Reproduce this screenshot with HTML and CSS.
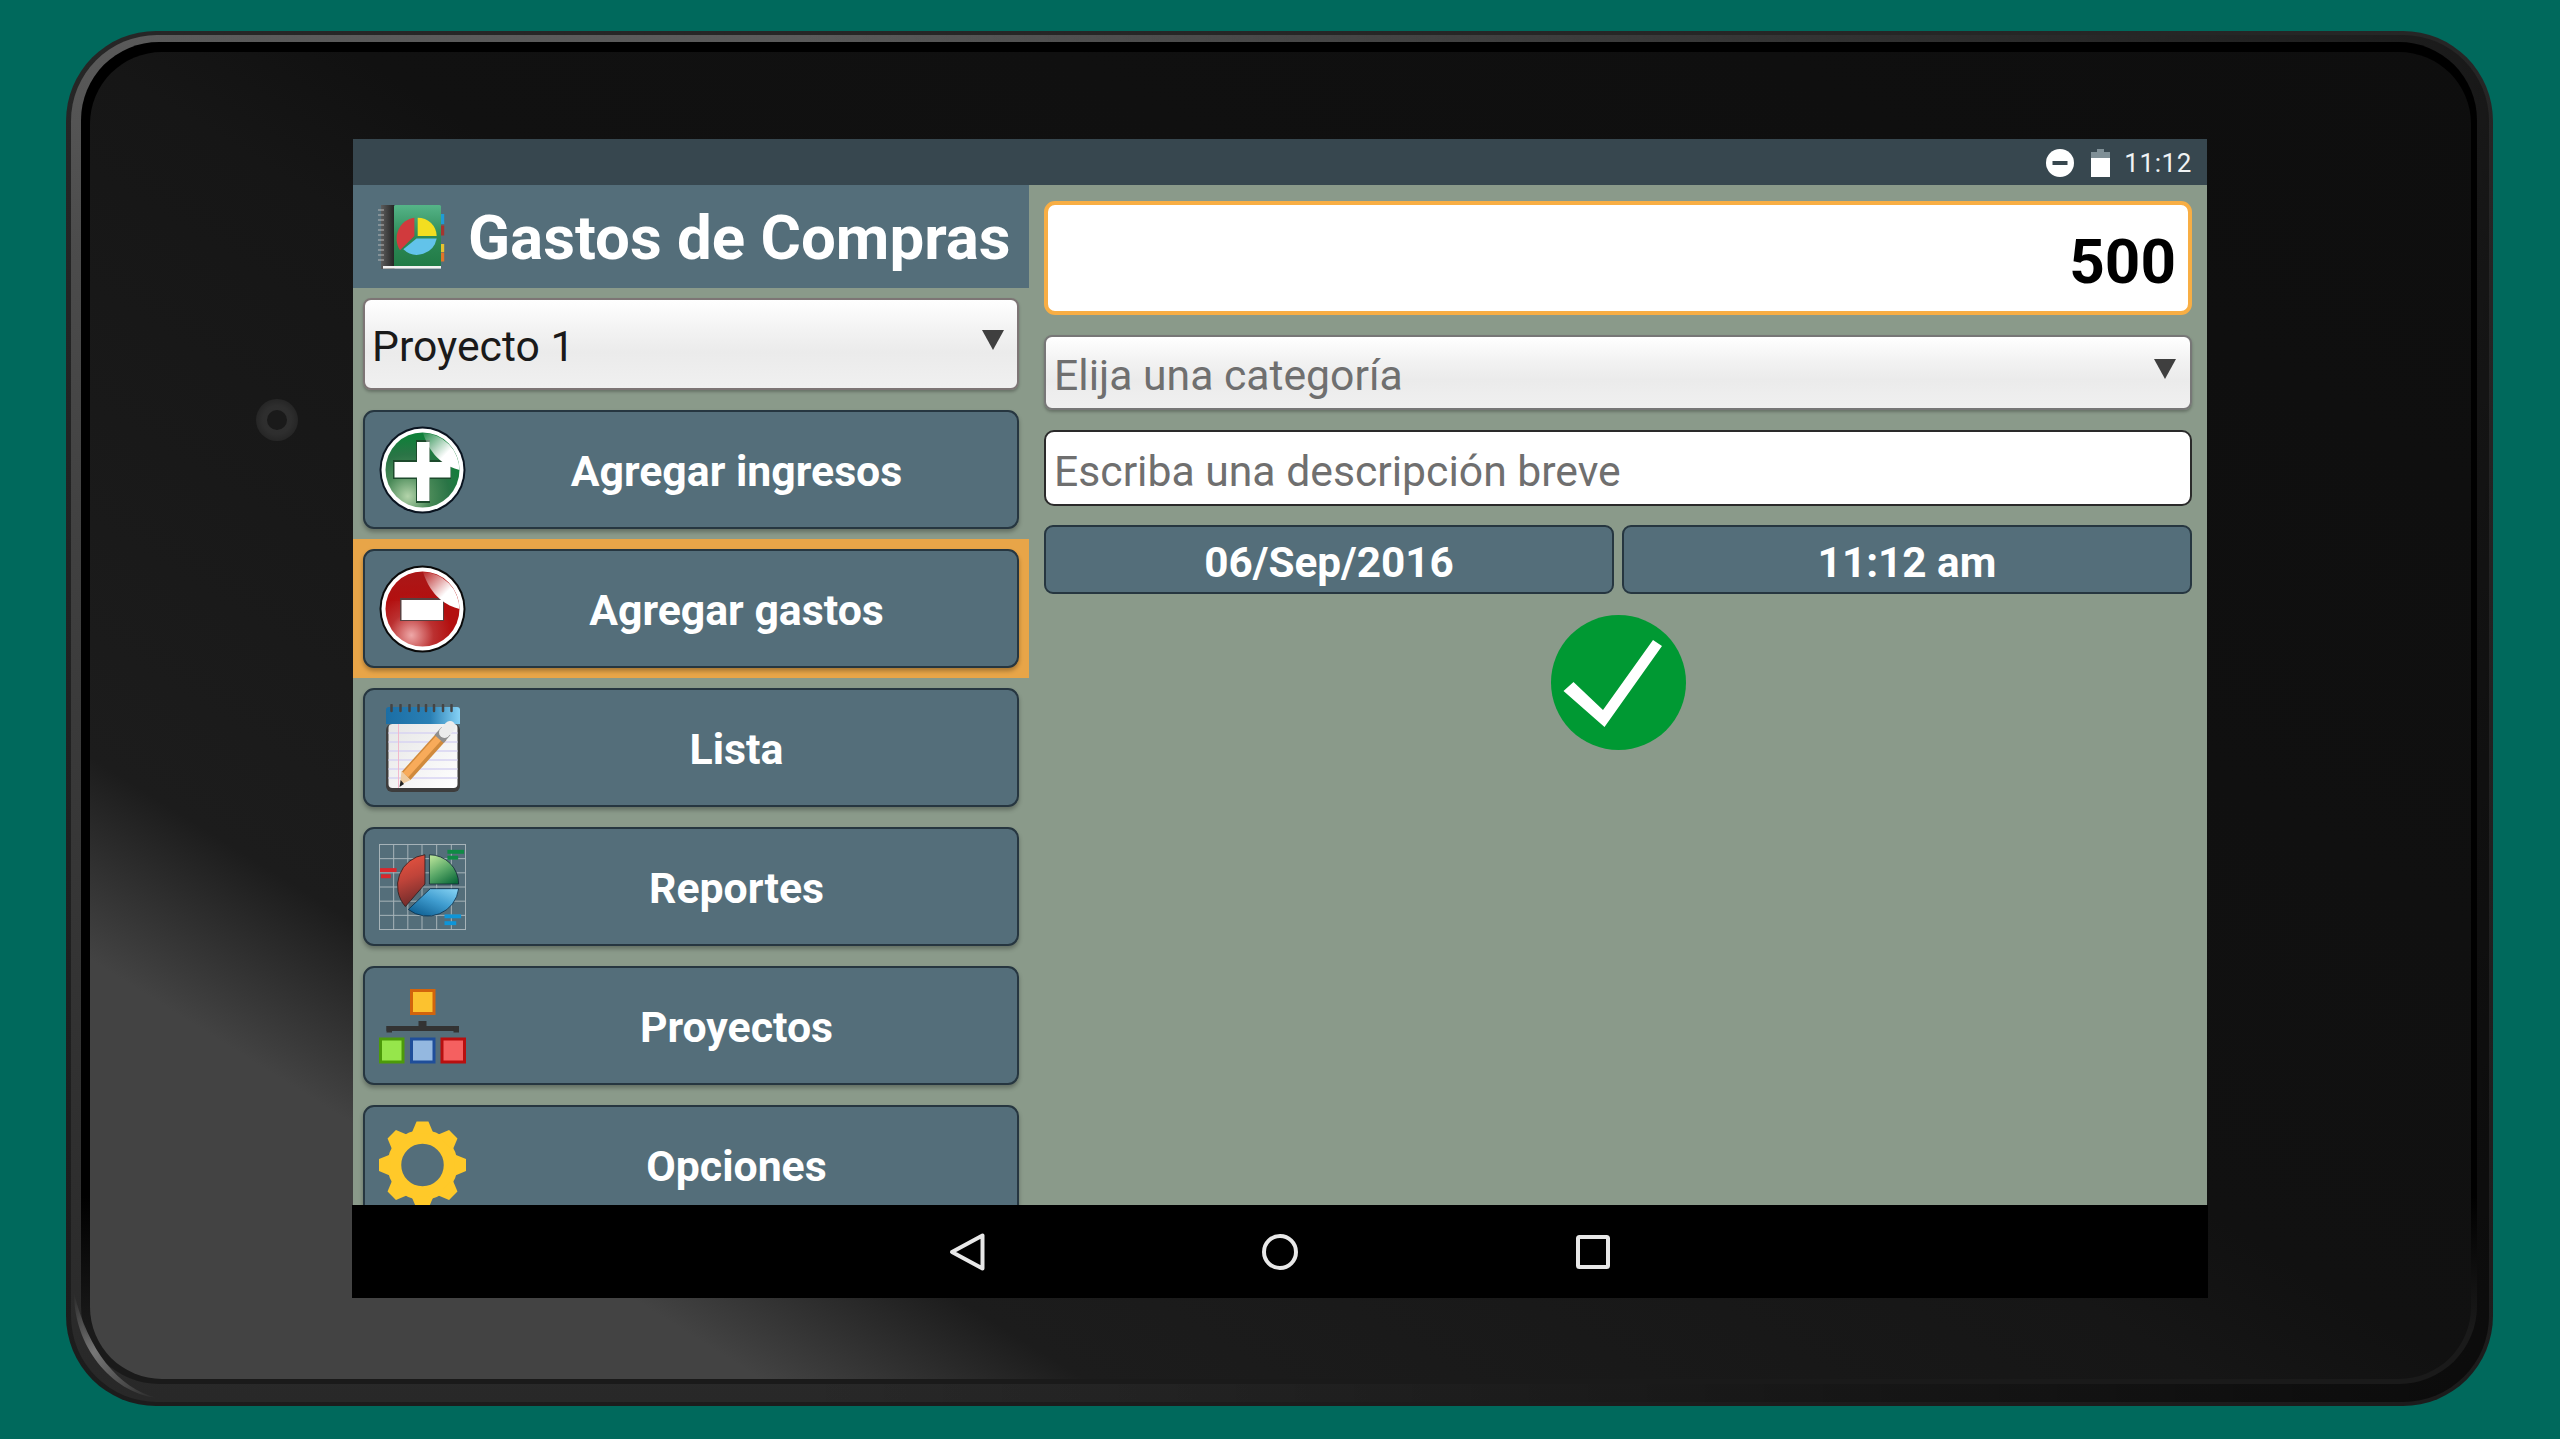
FILE: index.html
```html
<!DOCTYPE html>
<html lang="es">
<head>
<meta charset="utf-8">
<title>Gastos de Compras</title>
<link rel="stylesheet" href="styles.css">
</head>
<body>
<div class="device">
  <div class="rim">
    <div class="ring">
      <div class="face">
        <div class="camera"><div class="lens"></div></div>
        <div class="screen">
          <div class="statusbar">
            <svg class="st-dnd" viewBox="0 0 28 28"><circle cx="14" cy="14" r="14" fill="#fff"/><rect x="6.5" y="12" width="15" height="4" fill="#37474f"/></svg>
            <svg class="st-batt" viewBox="0 0 19 28"><path d="M6 0h7v3h6v25H0V3h6z" fill="#fff"/><path d="M6 0h7v3h6v6H0V3h6z" fill="#7f8f96"/></svg>
            <span class="st-time">11:12</span>
          </div>
          <div class="app">
            <div class="side">
              <header class="title">
                <svg class="logo" viewBox="0 0 70 70">
                  <defs>
                    <linearGradient id="lg1" x1="0" y1="0" x2="0" y2="1"><stop offset="0" stop-color="#55b488"/><stop offset=".5" stop-color="#2e8a57"/><stop offset="1" stop-color="#207a45"/></linearGradient>
                    <linearGradient id="lg2" x1="0" y1="0" x2="1" y2="0"><stop offset="0" stop-color="#5c5c5c"/><stop offset="1" stop-color="#232323"/></linearGradient>
                  </defs>
                  <rect x="5" y="3" width="13.5" height="64" fill="url(#lg2)"/>
                  <rect x="18" y="3" width="47" height="63" rx="1.5" fill="url(#lg1)"/>
                  <g stroke="#b5b5b5" stroke-width="1.2"><path d="M2 8h6M2 13h6M2 18h6M2 23h6M2 28h6M2 33h6M2 38h6M2 43h6M2 48h6M2 53h6M2 58h6"/></g>
                  <rect x="7" y="64" width="58" height="2.6" fill="#f2f2f2"/>
                  <rect x="65" y="12" width="3.2" height="10" fill="#1f9bd6"/>
                  <rect x="65" y="23.5" width="3.2" height="10" fill="#a5352f"/>
                  <rect x="65" y="42" width="3.2" height="8" fill="#e8c12f"/>
                  <rect x="65" y="50.5" width="3.2" height="9" fill="#e0752a"/>
                  <path d="M38.4 15.7A20 21 0 0 0 24 48.3L38.4 34z" fill="#d13a3d"/>
                  <path d="M41.7 15.7A19 18.500 0 0 1 60.700 34H41.700z" fill="#f3de20"/>
                  <path d="M27.300 47.300L40.500 36.500H60.700A20 20 0 0 1 27.300 47.300z" fill="#62c3ea"/>
                </svg>
                <h1 class="title-text">Gastos de Compras</h1>
              </header>
              <div class="project-wrap">
                <div class="spinner project">
                  <span class="spinner-text dark">Proyecto 1</span>
                  <span class="caret"></span>
                </div>
              </div>
              <div class="row">
                <button class="btn">
                  <svg class="ico" viewBox="0 0 87 88">
                    <defs>
                      <radialGradient id="pg1" cx=".3" cy=".85" r=".8"><stop offset="0" stop-color="#b3d4aa"/><stop offset=".38" stop-color="#4a8a58"/><stop offset=".7" stop-color="#2a7446"/><stop offset="1" stop-color="#0f8039"/></radialGradient>
                      <linearGradient id="pg2" x1="0" y1="0" x2="1" y2="1"><stop offset="0" stop-color="#fff" stop-opacity=".1"/><stop offset=".6" stop-color="#fff"/><stop offset="1" stop-color="#fff"/></linearGradient>
                    </defs>
                    <ellipse cx="43.500" cy="44" rx="43" ry="43.500" fill="#0a1420"/>
                    <ellipse cx="43.500" cy="44" rx="41" ry="41.500" fill="#fff"/>
                    <ellipse cx="43.500" cy="44" rx="37" ry="37.500" fill="url(#pg1)"/>
                    <path d="M37 14h14v20h21v19H51v24H37V53H14V34h23z" fill="#1d4a2c"/>
                    <path d="M38 16h12.500v20h21v15.500h-21V75H38V51.500H15.500V36H38z" fill="#fff"/>
                    <path d="M44 7A37 37.500 0 0 1 80.500 44C68 41 52 32 44 7z" fill="url(#pg2)"/>
                  </svg>
                  <span class="label">Agregar ingresos</span>
                </button>
              </div>
              <div class="row selected">
                <button class="btn">
                  <svg class="ico" viewBox="0 0 87 88">
                    <defs>
                      <radialGradient id="mg1" cx=".35" cy=".85" r=".55"><stop offset="0" stop-color="#eea8a8"/><stop offset=".55" stop-color="#bb3030"/><stop offset="1" stop-color="#b30f0f"/></radialGradient>
                      <linearGradient id="mg2" x1="0" y1="0" x2="1" y2="1"><stop offset="0" stop-color="#fff" stop-opacity=".1"/><stop offset=".6" stop-color="#fff"/><stop offset="1" stop-color="#fff"/></linearGradient>
                      <linearGradient id="mg3" x1="0" y1="0" x2="0" y2="1"><stop offset="0" stop-color="#a02020"/><stop offset="1" stop-color="#b30f0f"/></linearGradient>
                    </defs>
                    <ellipse cx="43.500" cy="44" rx="43" ry="43.500" fill="#0a0a0a"/>
                    <ellipse cx="43.500" cy="44" rx="41" ry="41.500" fill="#fff"/>
                    <ellipse cx="43.500" cy="44" rx="37" ry="37.500" fill="url(#mg1)"/>
                    <path d="M44 7A37 37.500 0 0 0 8 36L40 36L60 30z" fill="url(#mg3)" opacity=".55"/>
                    <rect x="21" y="33" width="44" height="23" fill="#5a4040"/>
                    <rect x="22.500" y="35" width="41.500" height="20" fill="#fff"/>
                    <path d="M44 7A37 37.500 0 0 1 80.500 44C68 41 52 32 44 7z" fill="url(#mg2)"/>
                  </svg>
                  <span class="label">Agregar gastos</span>
                </button>
              </div>
              <div class="row">
                <button class="btn">
                  <svg class="ico" viewBox="0 0 87 88">
                    <defs>
                      <linearGradient id="nb" x1="0" y1="0" x2="1" y2="0"><stop offset="0" stop-color="#1b6ea5"/><stop offset=".6" stop-color="#2a80b5"/><stop offset="1" stop-color="#86d2f6"/></linearGradient>
                      <linearGradient id="np" x1="0" y1="0" x2="1" y2="1"><stop offset="0" stop-color="#e6e6e6"/><stop offset="1" stop-color="#fff"/></linearGradient>
                    </defs>
                    <rect x="7" y="20" width="74" height="68" rx="6" fill="#3d3d3d"/>
                    <rect x="9.500" y="20" width="69" height="64" rx="4" fill="url(#np)"/>
                    <g stroke="#d8d4f2" stroke-width="1.500"><path d="M9.500 29h69M9.500 38h69M9.500 47h69M9.500 56h69M9.500 65h69M9.500 74h69"/></g>
                    <path d="M19.500 20v64" stroke="#f2b8cc" stroke-width="1"/>
                    <path d="M7 6a3 3 0 0 1 3-3h68a3 3 0 0 1 3 3v14H7z" fill="url(#nb)"/>
                    <g stroke="#444" stroke-width="2.500" stroke-linecap="round"><path d="M12.500 1v6M21.500 1v6M30.500 1v6M39.500 1v6M47 1v6M55 1v6M64 1v6M72.500 1v6"/></g>
                    <path d="M27 72L63 32" stroke="#d08a3c" stroke-width="12"/>
                    <path d="M26.500 71L62.500 31" stroke="#f8ab5a" stroke-width="7"/>
                    <path d="M60 35L67 27" stroke="#8f8f8f" stroke-width="12"/>
                    <path d="M65.500 28.500L71 22.500" stroke="#ececec" stroke-width="11" stroke-linecap="round"/>
                    <path d="M21 81L22.500 67L31.500 76z" fill="#eecb9f"/>
                    <path d="M20.500 83L21.700 76L25 80z" fill="#222"/>
                  </svg>
                  <span class="label">Lista</span>
                </button>
              </div>
              <div class="row">
                <button class="btn">
                  <svg class="ico" viewBox="0 0 89 88">
                    <defs>
                      <linearGradient id="rr" x1=".3" y1="0" x2=".5" y2="1"><stop offset="0" stop-color="#e8533f"/><stop offset=".45" stop-color="#c0443a"/><stop offset="1" stop-color="#6d2a2a"/></linearGradient>
                      <linearGradient id="rg" x1=".2" y1="0" x2=".8" y2="1"><stop offset="0" stop-color="#b4e096"/><stop offset=".5" stop-color="#5aa868"/><stop offset="1" stop-color="#0d6a3a"/></linearGradient>
                      <linearGradient id="rb" x1="1" y1="0" x2=".2" y2="1"><stop offset="0" stop-color="#8ad6f6"/><stop offset=".5" stop-color="#3f9ccf"/><stop offset="1" stop-color="#0e5f92"/></linearGradient>
                    </defs>
                    <g stroke="#a9b5ba" stroke-width="1" fill="none">
                      <rect x=".5" y=".5" width="88" height="87"/>
                      <path d="M15 0v88M29.500 0v88M44 0v88M59 0v88M74 0v88M0 15h89M0 29.500h89M0 44h89M0 58.500h89M0 73h89"/>
                    </g>
                    <path d="M47 11A32 32 0 0 0 27 64L47 41z" fill="url(#rr)" stroke="#2a1a1a" stroke-width=".8"/>
                    <path d="M51.600 11A30 30 0 0 1 81.500 41H51.600z" fill="url(#rg)" stroke="#123" stroke-width=".8"/>
                    <path d="M52.500 45.700H81.500A32 32 0 0 1 30 67z" fill="url(#rb)" stroke="#0a2a44" stroke-width=".8"/>
                    <rect x="70" y="6" width="17" height="4" fill="#0f8a44"/><rect x="70" y="12" width="11" height="4" fill="#0f8a44"/>
                    <rect x="1" y="24.700" width="17" height="4" fill="#d8272c"/><rect x="2" y="31" width="10" height="4" fill="#d8272c"/>
                    <rect x="67" y="72" width="17" height="4" fill="#0e95d8"/><rect x="67" y="79" width="12" height="4" fill="#0e95d8"/>
                  </svg>
                  <span class="label">Reportes</span>
                </button>
              </div>
              <div class="row">
                <button class="btn">
                  <svg class="ico" viewBox="0 0 87 88">
                    <rect x="32.500" y="8.500" width="22.500" height="23" fill="#fcc22f" stroke="#d2640c" stroke-width="3"/>
                    <rect x="39.500" y="39" width="8" height="6" fill="#333"/>
                    <rect x="7.500" y="44" width="72.500" height="5" fill="#333"/>
                    <rect x="7.500" y="44" width="5.500" height="6.500" fill="#333"/>
                    <rect x="74.500" y="44" width="5.500" height="6.500" fill="#333"/>
                    <rect x="1.500" y="57" width="22.500" height="23" fill="#96e64b" stroke="#4c9a0a" stroke-width="3"/>
                    <rect x="32.500" y="57" width="22.500" height="23" fill="#94b8e0" stroke="#1f4e9a" stroke-width="3"/>
                    <rect x="63" y="57" width="22.500" height="23" fill="#f56060" stroke="#b80f0f" stroke-width="3"/>
                  </svg>
                  <span class="label">Proyectos</span>
                </button>
              </div>
              <div class="row">
                <button class="btn">
                  <svg class="ico" viewBox="0 0 88 88">
                    <circle cx="44" cy="44" r="28.500" fill="none" stroke="#ffc929" stroke-width="14"/>
                    <g fill="#ffc929">
                      <polygon points="38,0 50,0 55,12 33,12"/>
                      <polygon points="38,0 50,0 55,12 33,12" transform="rotate(45 44 44)"/>
                      <polygon points="38,0 50,0 55,12 33,12" transform="rotate(90 44 44)"/>
                      <polygon points="38,0 50,0 55,12 33,12" transform="rotate(135 44 44)"/>
                      <polygon points="38,0 50,0 55,12 33,12" transform="rotate(180 44 44)"/>
                      <polygon points="38,0 50,0 55,12 33,12" transform="rotate(225 44 44)"/>
                      <polygon points="38,0 50,0 55,12 33,12" transform="rotate(270 44 44)"/>
                      <polygon points="38,0 50,0 55,12 33,12" transform="rotate(315 44 44)"/>
                    </g>
                  </svg>
                  <span class="label">Opciones</span>
                </button>
              </div>
            </div>
            <div class="main">
              <div class="amount">500</div>
              <div class="spinner category">
                <span class="spinner-text muted">Elija una categoría</span>
                <span class="caret"></span>
              </div>
              <div class="desc">Escriba una descripción breve</div>
              <div class="when">
                <button class="btn-flat">06/Sep/2016</button>
                <button class="btn-flat">11:12 am</button>
              </div>
              <button class="ok">
                <svg class="ok-ico" viewBox="0 0 135 135">
                  <circle cx="67.500" cy="67.500" r="67.500" fill="#009933"/>
                  <polygon points="12.500,76 22.500,67 52,95 102,25 111,31 53.500,112" fill="#fff"/>
                </svg>
              </button>
            </div>
          </div>
          <nav class="navbar">
            <svg class="nav-ico" viewBox="0 0 40 40"><path d="M35.500 3.500V36.500L5 20z" fill="none" stroke="#e8e8e8" stroke-width="4" stroke-linejoin="round"/></svg>
            <svg class="nav-ico" viewBox="0 0 40 40"><circle cx="20" cy="20" r="16" fill="none" stroke="#e8e8e8" stroke-width="4"/></svg>
            <svg class="nav-ico" viewBox="0 0 40 40"><rect x="5" y="5" width="30" height="30" rx="1.500" fill="none" stroke="#e8e8e8" stroke-width="4"/></svg>
          </nav>
        </div>
      </div>
    </div>
  </div>
  <svg class="gloss" viewBox="66 1270 110 136">
    <defs><linearGradient id="gl" x1="0" y1="0" x2="1" y2="1"><stop offset="0" stop-color="#777" stop-opacity="0"/><stop offset=".4" stop-color="#777"/><stop offset="1" stop-color="#777" stop-opacity="0"/></linearGradient></defs>
    <path d="M74 1293C74 1345 110 1392 157 1398C118 1388 88 1350 74 1293z" fill="url(#gl)"/>
  </svg>
</div>
</body>
</html>
```
FILE: styles.css
```css
* { box-sizing: border-box; }
html, body { margin: 0; padding: 0; }
body {
  width: 2560px;
  height: 1439px;
  overflow: hidden;
  padding: 31px 0 0 66px;
  background: #00695c;
  font-family: Roboto, "Liberation Sans", sans-serif;
}
.device {
  position: relative;
  width: 2427px;
  height: 1375px;
  padding: 4px 4px 4px 5px;
  border-radius: 90px;
  background: linear-gradient(180deg, #262626 0, #1c1c1c 100%);
}
.rim {
  height: 100%;
  padding: 7px 12px 18px 10px;
  border-radius: 86px;
  background:
    linear-gradient(90deg, rgba(0,0,0,0) 0, rgba(0,0,0,0) 30%, rgba(0,0,0,.72) 100%),
    linear-gradient(180deg, #5a5a5a 0, #4c4c4c 15%, #3a3a3a 50%, #282828 100%);
}
.ring {
  height: 100%;
  padding: 10px 6px 5px 9px;
  border-radius: 78px;
  background: linear-gradient(180deg, #000 0, #000 86%, #1a1a1a 96%);
}
.face {
  position: relative;
  height: 100%;
  padding: 87px 0 0 263px;
  border-radius: 72px;
  background: linear-gradient(212deg, #0e0e0e 0, #111 47%, #161616 53%, #1c1c1c 77.9%, #434343 85.1%, #434343 100%);
}
.camera {
  position: absolute;
  left: 166px;
  top: 347px;
  width: 42px;
  height: 42px;
  display: flex;
  align-items: center;
  justify-content: center;
  border-radius: 50%;
  background: radial-gradient(circle, #303030 0, #2e2e2e 48%, #262626 70%, #191919 100%);
}
.lens { width: 20px; height: 20px; border-radius: 50%; background: #1a1a1a; }
.gloss {
  position: absolute;
  left: 0;
  top: 1239px;
  width: 110px;
  height: 136px;
}
.screen {
  width: 1854px;
  height: 1158px;
  display: flex;
  flex-direction: column;
}
.statusbar {
  height: 46px;
  flex: none;
  display: flex;
  align-items: center;
  justify-content: flex-end;
  padding: 2px 15px 0 0;
  background: #37474f;
}
.st-dnd { width: 28px; height: 28px; margin-right: 17px; }
.st-batt { width: 19px; height: 28px; margin-right: 14px; }
.st-time { color: #f0f3f4; font-size: 26px; line-height: 44px; letter-spacing: .6px; }
.app {
  height: 1020px;
  flex: none;
  display: flex;
  overflow: hidden;
  background: #8a9a8a;
}
.side { width: 676px; flex: none; }
.title {
  height: 103px;
  display: flex;
  align-items: center;
  padding-left: 23px;
  background: #546e7a;
}
.logo { width: 70px; height: 70px; flex: none; }
.title-text {
  margin: 3px 0 0 22px;
  color: #fff;
  font-size: 61.8px;
  font-weight: 700;
  white-space: nowrap;
}
.project-wrap { padding: 10px; }
.spinner {
  display: flex;
  align-items: center;
  justify-content: space-between;
  border: 2px solid #7d7575;
  border-radius: 8px;
  background: linear-gradient(180deg, #fff 0, #f2f2f2 35%, #ebebeb 60%, #f0f0f0 100%);
  box-shadow: 0 2px 3px rgba(0,0,0,.25);
}
.project { height: 92px; padding: 0 13px 0 7px; }
.category { height: 75px; margin-top: 20px; padding: 0 14px 0 8px; border-color: #777; }
.spinner-text { font-size: 42.7px; padding-top: 4px; white-space: nowrap; }
.category .spinner-text { padding-top: 5px; }
.dark { color: #1a1a1a; }
.muted { color: #6f6f6f; }
.caret {
  width: 0;
  height: 0;
  margin-bottom: 8px;
  border-left: 11.5px solid transparent;
  border-right: 11.5px solid transparent;
  border-top: 20px solid #3f3f3f;
}
.row { height: 139px; padding: 10px 10px 10px; }
.selected { background: #e8a548; }
.btn {
  width: 100%;
  height: 119px;
  display: flex;
  align-items: center;
  padding: 0 10px 0 14px;
  border: 2px solid #263640;
  border-radius: 11px;
  background: #546e7a;
  box-shadow: 0 3px 4px rgba(0,0,0,.28);
  font-family: inherit;
}
.ico { width: 87px; height: 88px; flex: none; display: block; }
.label {
  flex: 1;
  padding-top: 2px;
  color: #fff;
  font-size: 42.8px;
  font-weight: 700;
  text-align: center;
  white-space: nowrap;
}
.main {
  flex: 1;
  display: flex;
  flex-direction: column;
  padding: 16px 15px 0 15px;
}
.amount {
  height: 114px;
  padding: 4px 12px 0 0;
  border: 4px solid #f8ae44;
  border-radius: 11px;
  background: #fff;
  color: #000;
  font-size: 62px;
  font-weight: 700;
  line-height: 106px;
  text-align: right;
}
.desc {
  height: 76px;
  margin-top: 20px;
  padding: 7px 0 0 8px;
  border: 2px solid #2a2a2a;
  border-radius: 10px;
  background: #fff;
  color: #6f6f6f;
  font-size: 42.7px;
  line-height: 65px;
  white-space: nowrap;
}
.when { display: flex; gap: 8px; margin-top: 19px; }
.btn-flat {
  flex: 1;
  height: 69px;
  padding: 6px 0 0;
  border: 2px solid #263640;
  border-radius: 9px;
  background: #546e7a;
  color: #fff;
  font-family: inherit;
  font-size: 42.3px;
  font-weight: 700;
  white-space: nowrap;
}
.ok {
  align-self: center;
  width: 135px;
  height: 135px;
  margin-top: 21px;
  padding: 0;
  border: 0;
  background: none;
}
.ok-ico { display: block; width: 135px; height: 135px; }
.navbar {
  height: 93px;
  flex: none;
  display: flex;
  align-items: center;
  justify-content: center;
  gap: 273px;
  margin: 0 -1px;
  background: #000;
}
.nav-ico { width: 40px; height: 40px; display: block; }
```
